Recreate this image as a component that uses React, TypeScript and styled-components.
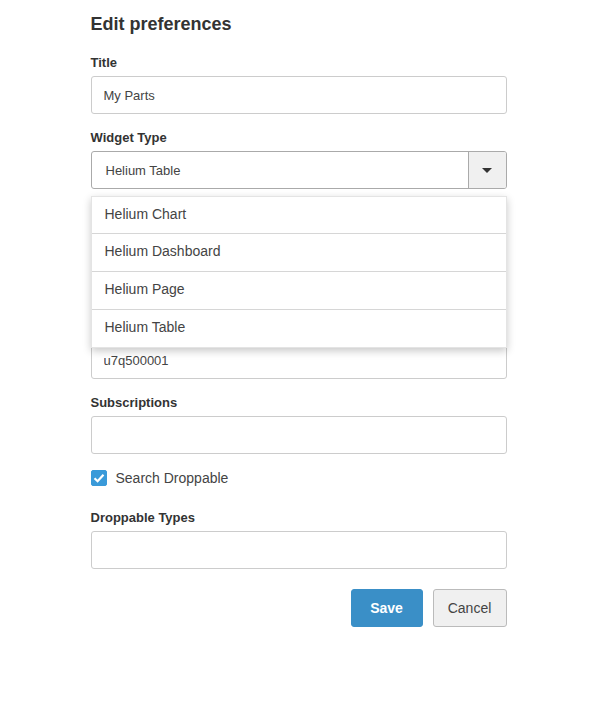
import React from 'react';
import styled, { createGlobalStyle } from 'styled-components';

const GlobalStyle = createGlobalStyle`
  body {
    margin: 0;
    background: #fff;
    font-family: "Liberation Sans", Arial, sans-serif;
    color: #333;
  }
`;

const Panel = styled.form`
  width: 416px;
  margin: 0 auto;
  padding: 14px 0 40px 1px;
  display: flex;
  flex-direction: column;
`;

const Heading = styled.h2`
  font-size: 18px;
  font-weight: bold;
  line-height: 20px;
  margin: 0 0 20px;
  color: #333;
`;

const Field = styled.div`
  display: flex;
  flex-direction: column;
  margin-bottom: 15px;
`;

const Label = styled.label`
  font-size: 13px;
  font-weight: bold;
  line-height: 18px;
  min-height: 18px;
  margin-bottom: 4px;
  color: #333;
`;

const Input = styled.input`
  box-sizing: border-box;
  height: 38px;
  width: 100%;
  border: 1px solid #ccc;
  border-radius: 3px;
  padding: 0 12px;
  font-family: inherit;
  font-size: 13px;
  color: #444;
  background: #fff;
  outline: none;
`;

const SelectWrap = styled.div`
  position: relative;
`;

const Select = styled.div`
  box-sizing: border-box;
  height: 38px;
  display: flex;
  border: 1px solid #aaa;
  border-radius: 3px;
  overflow: hidden;
  background: #fff;
`;

const SelectValue = styled.div`
  flex: 1;
  display: flex;
  align-items: center;
  padding-left: 14px;
  font-size: 13px;
  color: #444;
`;

const ArrowButton = styled.div`
  width: 37px;
  border-left: 1px solid #aaa;
  background: #f0f0f0;
  display: flex;
  align-items: center;
  justify-content: center;
`;

const Caret = styled.span`
  width: 0;
  height: 0;
  border-left: 5px solid transparent;
  border-right: 5px solid transparent;
  border-top: 5px solid #333;
`;

const Menu = styled.ul`
  position: absolute;
  top: 45px;
  left: 0;
  right: 0;
  z-index: 10;
  margin: 0;
  padding: 0;
  list-style: none;
  background: #fff;
  border: 1px solid #e4e4e4;
  box-shadow: 0 3px 8px rgba(0, 0, 0, 0.22);
`;

const MenuItem = styled.li`
  box-sizing: border-box;
  height: 36px;
  display: flex;
  align-items: center;
  padding: 0 0 2px 13px;
  font-size: 14px;
  color: #444;
  & + & {
    height: 38px;
    padding-bottom: 3px;
    border-top: 1px solid #d6d6d6;
  }
`;

const CheckRow = styled.label`
  display: flex;
  align-items: center;
  gap: 9px;
  height: 20px;
  margin: -1px 0 21px;
  font-size: 14px;
  color: #444;
`;

const CheckBox = styled.span<{ $checked?: boolean }>`
  width: 16px;
  height: 16px;
  box-sizing: border-box;
  border-radius: 2px;
  background: ${({ $checked }) => ($checked ? '#3a9ad9' : '#fff')};
  border: 1px solid ${({ $checked }) => ($checked ? '#3a9ad9' : '#aaa')};
  display: flex;
  align-items: center;
  justify-content: center;
`;

const Actions = styled.div`
  display: flex;
  justify-content: flex-end;
  gap: 10px;
  margin-top: 5px;
`;

const Button = styled.button<{ $primary?: boolean }>`
  height: 38px;
  padding: 0 14px;
  border-radius: 3px;
  font-family: inherit;
  font-size: 14px;
  cursor: pointer;
  border: 1px solid ${({ $primary }) => ($primary ? '#3a8fc7' : '#bbb')};
  background: ${({ $primary }) => ($primary ? '#3a8fc7' : '#f0f0f0')};
  color: ${({ $primary }) => ($primary ? '#fff' : '#444')};
  font-weight: ${({ $primary }) => ($primary ? 'bold' : 'normal')};
  min-width: ${({ $primary }) => ($primary ? '72px' : '74px')};
`;

// fields that sit under the open menu
const Covered = styled.div`
  display: flex;
  flex-direction: column;
  & > ${CheckRow} {
    margin: 0 0 20px;
  }
`;

const widgetTypes = ['Helium Chart', 'Helium Dashboard', 'Helium Page', 'Helium Table'];

export default function App() {
  return (
    <>
      <GlobalStyle />
      <Panel onSubmit={(e) => e.preventDefault()}>
        <Heading>Edit preferences</Heading>
        <Field>
          <Label>Title</Label>
          <Input defaultValue="My Parts" />
        </Field>
        <Field>
          <Label>Widget Type</Label>
          <SelectWrap>
            <Select>
              <SelectValue>Helium Table</SelectValue>
              <ArrowButton>
                <Caret />
              </ArrowButton>
            </Select>
            <Menu>
              {widgetTypes.map((t) => (
                <MenuItem key={t}>{t}</MenuItem>
              ))}
            </Menu>
          </SelectWrap>
        </Field>
        <Covered>
          <Field>
            <Label />
            <Input />
          </Field>
          <CheckRow>
            <CheckBox />
          </CheckRow>
          <Field>
            <Label />
            <Input defaultValue="u7q500001" />
          </Field>
        </Covered>
        <Field>
          <Label>Subscriptions</Label>
          <Input />
        </Field>
        <CheckRow>
          <CheckBox $checked>
            <svg width="12" height="10" viewBox="0 0 12 10">
              <path d="M1.5 5.2 L4.6 8.2 L10.5 1.8" fill="none" stroke="#fff" strokeWidth="2.2" />
            </svg>
          </CheckBox>
          Search Droppable
        </CheckRow>
        <Field>
          <Label>Droppable Types</Label>
          <Input />
        </Field>
        <Actions>
          <Button $primary type="submit">Save</Button>
          <Button type="button">Cancel</Button>
        </Actions>
      </Panel>
    </>
  );
}
